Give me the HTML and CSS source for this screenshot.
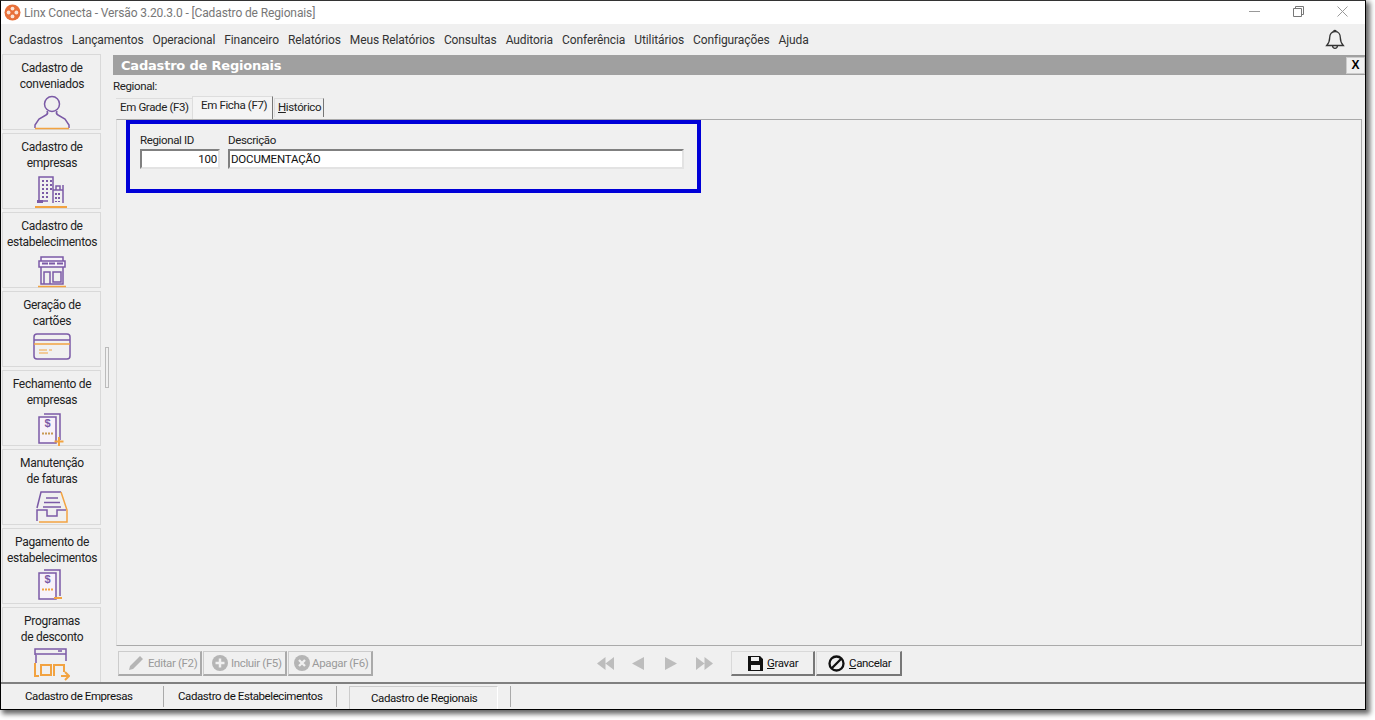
FILE: index.html
```html
<!DOCTYPE html>
<html lang="pt-BR">
<head>
<meta charset="utf-8">
<title>Linx Conecta</title>
<link rel="stylesheet" href="styles.css">
</head>
<body>
<div class="window">
  <header class="titlebar">
    <svg class="applogo" width="17" height="17" viewBox="0 0 17 17"><circle cx="8.500" cy="8.500" r="8" fill="#e8703a"/><circle cx="8.500" cy="4.600" r="1.900" fill="#fbe3d6"/><circle cx="8.500" cy="12.400" r="1.900" fill="#fbe3d6"/><circle cx="4.600" cy="8.500" r="1.900" fill="#fbe3d6"/><circle cx="12.400" cy="8.500" r="1.900" fill="#fbe3d6"/></svg>
    <span class="titletext">Linx Conecta - Versão 3.20.3.0 - [Cadastro de Regionais]</span>
    <div class="winctrls">
      <svg width="11" height="11" viewBox="0 0 11 11"><path d="M0 5.500H11" stroke="#999" fill="none"/></svg>
      <svg width="11" height="11" viewBox="0 0 11 11"><path d="M.5 2.500h8v8h-8zM2.500 2.500v-2h8v8h-2" stroke="#777" fill="none"/></svg>
      <svg width="11" height="11" viewBox="0 0 11 11"><path d="M.5.5l10 10M10.500.5l-10 10" stroke="#999" fill="none"/></svg>
    </div>
  </header>
  <nav class="menubar">
    <span>Cadastros</span><span>Lançamentos</span><span>Operacional</span><span>Financeiro</span><span>Relatórios</span><span>Meus Relatórios</span><span>Consultas</span><span>Auditoria</span><span>Conferência</span><span>Utilitários</span><span>Configurações</span><span>Ajuda</span>
    <svg class="bell" width="20" height="22" viewBox="0 0 20 22"><path d="M10 2.500c-3.600 0-5.300 2.800-5.300 6 0 4-1 5.800-3 8h16.600c-2-2.200-3-4-3-8 0-3.200-1.700-6-5.300-6zM8.800 2.500c0-1.600 2.400-1.600 2.400 0M7.500 16.800c.3 3.400 4.700 3.400 5 0" fill="none" stroke="#333" stroke-width="1.300"/></svg>
  </nav>
  <div class="body">
    <aside class="sidebar">
      <div class="sidebtn"><p>Cadastro de<br>conveniados</p>
        <svg width="36" height="36" viewBox="0 0 36 36"><circle cx="18" cy="9" r="7.500" fill="none" stroke="#7b5aa6" stroke-width="1.500"/><path d="M13 16c1 2 1 3-1 4l-7 4-4 6v3M23 16c-1 2-1 3 1 4l7 4 4 6v3" fill="none" stroke="#7b5aa6" stroke-width="1.500"/><path d="M1 33.500h34" stroke="#f2a341" stroke-width="1.500"/></svg></div>
      <div class="sidebtn"><p>Cadastro de<br>empresas</p>
        <svg width="36" height="36" viewBox="0 0 36 36"><path d="M5 28V3h14v26M19 16h10v13M22 16v-4h4v4M29 11v5M5 27h9" fill="none" stroke="#7b5aa6" stroke-width="1.500"/><path d="M8 6h2v2H8zM12 6h2v2h-2zM16 6h2v2h-2zM8 10h2v2H8zM12 10h2v2h-2zM16 10h2v2h-2zM8 14h2v2H8zM12 14h2v2h-2zM16 14h2v2h-2zM8 18h2v2H8zM12 18h2v2h-2zM8 22h2v2H8zM12 22h2v2h-2zM21 19h2v2h-2zM24 19h2v2h-2zM21 23h2v2h-2zM24 23h2v2h-2zM21 27h2v1h-2zM24 27h2v1h-2zM3 29h6v-3H3z" fill="#7b5aa6"/><path d="M1 33h32" stroke="#f2a341" stroke-width="2"/></svg></div>
      <div class="sidebtn"><p>Cadastro de<br>estabelecimentos</p>
        <svg width="36" height="36" viewBox="0 0 36 36"><path d="M5 8h26v6H5zM7 4h22v4H7z" fill="#f7f2fa" stroke="#7b5aa6" stroke-width="1.500"/><path d="M8 10.500h6M15 10.500h6M23 10.500h6" stroke="#7b5aa6" stroke-width="2"/><path d="M7 14v17h22V14M10 31V19h6v12M19 19h8v10h-8z" fill="none" stroke="#7b5aa6" stroke-width="1.500"/><path d="M4 33.500h28" stroke="#f2a341" stroke-width="1.500"/></svg></div>
      <div class="sidebtn"><p>Geração de<br>cartões</p>
        <svg width="38" height="32" viewBox="0 0 38 32"><rect x="1" y="2" width="36" height="25" rx="3" fill="none" stroke="#7b5aa6" stroke-width="1.500"/><path d="M1 8h36" stroke="#7b5aa6" stroke-width="1.500"/><path d="M1 12h36" stroke="#f2a341" stroke-width="1.500"/><path d="M6 18h8M16 18h3M6 21h9" stroke="#f2a341" stroke-width="1.200"/></svg></div>
      <div class="sidebtn"><p>Fechamento de<br>empresas</p>
        <svg width="30" height="36" viewBox="0 0 30 36"><path d="M7 3h16v26" fill="none" stroke="#7b5aa6" stroke-width="1.500"/><path d="M2 6h17v26H2z" fill="#f7f2fa" stroke="#7b5aa6" stroke-width="1.500"/><text x="10.500" y="16" class="dollar">$</text><path d="M5 22.500h12" stroke="#c99a55" stroke-width="2" stroke-dasharray="2 1"/><path d="M22 26v9M17.500 30.500h9" stroke="#f2a341" stroke-width="2"/></svg></div>
      <div class="sidebtn"><p>Manutenção<br>de faturas</p>
        <svg width="34" height="34" viewBox="0 0 34 34"><path d="M2 18L6 2h20" fill="none" stroke="#7b5aa6" stroke-width="1.500"/><path d="M26 2l6 18v12H4" fill="none" stroke="#f2a341" stroke-width="1.500"/><path d="M2 31V20h10v6h10v-6h9" fill="none" stroke="#7b5aa6" stroke-width="1.500"/><path d="M11 8h12M9 12.500h16M8 17h18" stroke="#7b5aa6" stroke-width="1.500"/></svg></div>
      <div class="sidebtn"><p>Pagamento de<br>estabelecimentos</p>
        <svg width="30" height="32" viewBox="0 0 30 32"><path d="M7 1h16v26" fill="none" stroke="#7b5aa6" stroke-width="1.500"/><path d="M2 4h17v26H2z" fill="#f7f2fa" stroke="#7b5aa6" stroke-width="1.500"/><text x="10.500" y="14" class="dollar">$</text><path d="M5 20.500h11" stroke="#f2a341" stroke-width="2" stroke-dasharray="2 1"/><path d="M17 29h8" stroke="#f2a341" stroke-width="2"/></svg></div>
      <div class="sidebtn"><p>Programas<br>de desconto</p>
        <svg width="36" height="34" viewBox="0 0 36 34"><path d="M1 7V1h31v12M1 6h31M2 7v8" fill="none" stroke="#7b5aa6" stroke-width="1.500"/><path d="M24 3h4" stroke="#7b5aa6" stroke-width="1.500"/><path d="M1 15v13h4M7 17h10v10H7zM20 28V17h10v7M27 28h8M31 24l4 4-4 4" fill="none" stroke="#f2a341" stroke-width="2"/></svg></div>
    </aside>
    <div class="splitter"><i></i></div>
    <main class="content">
      <div class="formhead"><h1>Cadastro de Regionais</h1><button class="closex" type="button">X</button></div>
      <div class="crumb">Regional:</div>
      <div class="tabs">
        <span class="tab first">Em Grade (F3)</span>
        <span class="tab active">Em Ficha (F7)</span>
        <span class="tab third"><u>H</u>istórico</span>
      </div>
      <section class="panel">
        <div class="highlight">
          <label class="field idfield">Regional ID<input class="input num" value="100"></label>
          <label class="field descfield">Descrição<input class="input" value="DOCUMENTAÇÃO"></label>
        </div>
      </section>
      <div class="toolbar">
        <button class="btn dis w84 p9" type="button"><svg width="16" height="16" viewBox="0 0 16 16"><path d="M1 15l1-4L11 2l3 3-9 9z M12 1l3 3-1 1-3-3z" fill="#b5b5b5"/></svg>Editar (F2)</button>
        <button class="btn dis w84 p8" type="button"><svg width="16" height="16" viewBox="0 0 16 16"><circle cx="8" cy="8" r="8" fill="#b5b5b5"/><path d="M8 3.500v9M3.500 8h9" stroke="#f0f0f0" stroke-width="2.500"/></svg>Incluir (F5)</button>
        <button class="btn dis w85 p5" type="button"><svg width="16" height="16" viewBox="0 0 16 16"><circle cx="8" cy="8" r="8" fill="#b5b5b5"/><path d="M5 5l6 6M11 5l-6 6" stroke="#f0f0f0" stroke-width="2.300"/></svg>Apagar (F6)</button>
        <div class="nav">
          <svg width="17" height="13" viewBox="0 0 17 13"><path d="M8.500 0v13L0 6.500zM17 0v13L8.500 6.500z" fill="#bdbdbd"/></svg>
          <svg width="12" height="13" viewBox="0 0 12 13"><path d="M12 0v13L0 6.500z" fill="#bdbdbd"/></svg>
          <svg width="12" height="13" viewBox="0 0 12 13"><path d="M0 0v13l12-6.500z" fill="#bdbdbd"/></svg>
          <svg width="17" height="13" viewBox="0 0 17 13"><path d="M0 0v13l8.500-6.500zM8.500 0v13L17 6.500z" fill="#bdbdbd"/></svg>
        </div>
        <button class="btn w84 save" type="button"><svg width="15" height="15" viewBox="0 0 15 15"><path fill-rule="evenodd" d="M0 0h12l3 3v12H0zM3 1v4h8V1zM3 9v5h9V9z" fill="#111"/></svg><span><u>G</u>ravar</span></button>
        <button class="btn w86 cancel" type="button"><svg width="17" height="17" viewBox="0 0 17 17"><circle cx="8.500" cy="8.500" r="7" fill="none" stroke="#111" stroke-width="2.300"/><path d="M3.500 13.500l10-10" stroke="#111" stroke-width="2.300"/></svg><span><u>C</u>ancelar</span></button>
      </div>
    </main>
  </div>
  <footer class="statusbar">
    <span class="st s1">Cadastro de Empresas</span>
    <span class="st s2">Cadastro de Estabelecimentos</span>
    <span class="st s3">Cadastro de Regionais</span>
    <span class="st s4"></span>
  </footer>
</div>
</body>
</html>
```
FILE: styles.css
```css
* { box-sizing: border-box; }
html, body { margin: 0; padding: 0; height: 720px; overflow: hidden; background: #fff; }
body { font: 12px Roboto, "Liberation Sans", Arial, sans-serif; color: #111; }
.window {
  width: 1366px; height: 710px; background: #f0f0f0;
  border: 1px solid #000; border-top: 1px solid #333; display: flex; flex-direction: column;
  box-shadow: 3px 3px 5px 1px #666;
}
.titlebar { height: 23px; background: #fff; display: flex; align-items: center; padding-left: 3px; flex: none; }
.applogo { margin-right: 3px; flex: none; }
.titletext { color: #777; font-size: 12px; letter-spacing: -.12px; }
.winctrls { margin-left: auto; display: flex; gap: 33px; padding-right: 17px; margin-top: -2px; }
.menubar { height: 31px; flex: none; background: #f0f0f0; display: flex; align-items: center; padding-left: 8px; gap: 9px; color: #333; letter-spacing: -.1px; }
.bell { margin-left: auto; margin-right: 20px; }
.body { flex: 1; display: flex; min-height: 0; }
.sidebar { width: 99px; flex: none; margin: -1px 0 0 1px; display: flex; flex-direction: column; gap: 3px; overflow: hidden; height: 629px; }
.sidebtn { flex: none; height: 76px; border: 1px solid #d9d9d9; display: flex; flex-direction: column; align-items: center; padding-left: 1px; background: #f0f0f0; }
.sidebtn p { margin: 5px 0 0; height: 32px; line-height: 16px; text-align: center; white-space: nowrap; color: #222; letter-spacing: -.3px; }
.sidebtn svg { flex: none; margin-top: 3px; }
.dollar { font: bold 11px "Liberation Sans", sans-serif; fill: #7b5aa6; text-anchor: middle; }
.splitter { width: 12px; flex: none; display: flex; justify-content: center; padding-top: 292px; height: 628px; }
.splitter i { display: block; width: 4px; height: 41px; border: 1px solid #bbb; }
.content { flex: 1; min-width: 0; display: flex; flex-direction: column; font-size: 11.500px; letter-spacing: -.36px; }
.formhead { height: 20px; flex: none; background: #a0a0a0; display: flex; align-items: center; justify-content: space-between; padding-left: 8px; }
.formhead h1 { margin: 0; font: bold 13px "DejaVu Sans", sans-serif; letter-spacing: -.2px; color: #fff; }
.closex { width: 19px; height: 17px; padding: 0; margin: 0 0 0 auto; border: 1px solid #ccc; background: #f0f0f0; font: bold 12px "Liberation Sans", sans-serif; color: #000; }
.crumb { height: 21px; flex: none; padding-top: 4px; color: #222; }
.tabs { display: flex; height: 23px; flex: none; padding-left: 3px; align-items: flex-start; color: #222; }
.tab { margin-top: 2px; height: 19px; line-height: 17px; background: #f0f0f0; border-top: 1px solid #ddd; }
.tab.first { width: 76px; padding-left: 4px; }
.tab.active { margin-top: 0; height: 23px; width: 81px; background: #f4f4f4; padding-left: 8px; line-height: 16px; border: 1px solid #ddd; border-bottom: 0; border-right: 1px solid #777; }
.tab.third { width: 50px; margin-left: 1px; padding-left: 3px; border-right: 1px solid #777; border-left: 1px solid #ddd; }
.panel { margin: 0 3px; height: 527px; flex: none; border: 1px solid #aaa; border-left-color: #ddd; background: #f0f0f0; padding: 0 0 0 9px; }
.highlight { width: 575px; height: 73px; border: 4px solid #0000d8; display: flex; gap: 8px; padding: 8px 12px 0 10px; }
.field { display: flex; flex-direction: column; color: #222; line-height: 16px; }
.idfield { width: 80px; }
.descfield { width: 456px; }
.input { height: 20px; width: 100%; margin-top: 1px; padding: 0 1px 1px; border: 2px solid #e3e3e3; border-top-color: #808080; border-left-color: #808080; background: #fff; font: 11.500px Roboto, sans-serif; letter-spacing: -.18px; color: #111; outline: none; }
.num { text-align: right; }
.toolbar { height: 35px; flex: none; display: flex; align-items: center; padding-left: 5px; gap: 1px; }
.btn { height: 25px; padding: 0; display: flex; align-items: center; gap: 4px; background: #f0f0f0; border: 1px solid #d9d9d9; border-right: 2px solid #777; border-bottom: 2px solid #777; font: 11.500px Roboto, sans-serif; letter-spacing: -.36px; color: #111; white-space: nowrap; }
.btn svg { flex: none; }
.btn.dis { color: #9a9a9a; border-color: #ccc #aaa #aaa #ccc; }
.w84 { width: 84px; }
.w85 { width: 85px; }
.w86 { width: 86px; }
.p9 { padding-left: 9px; }
.p8 { padding-left: 8px; gap: 3px; }
.p5 { padding-left: 5px; gap: 2px; }
.save { padding-left: 16px; }
.cancel { padding-left: 11px; }
.nav { width: 356px; display: flex; align-items: center; padding-left: 223px; flex: none; }
.nav svg:nth-child(2) { margin-left: 18px; }
.nav svg:nth-child(3) { margin-left: 21px; }
.nav svg:nth-child(4) { margin-left: 19px; }
.statusbar { height: 27px; flex: none; border-top: 2px solid #808080; background: #f0f0f0; display: flex; align-items: flex-end; font-size: 11.500px; letter-spacing: -.42px; }
.st { height: 21px; line-height: 21px; margin-bottom: 2px; white-space: nowrap; color: #111; }
.s1 { width: 163px; padding-left: 24px; border-right: 1px solid #aaa; }
.s2 { width: 173px; padding-left: 14px; border-right: 1px solid #aaa; }
.s3 { width: 149px; margin-left: 12px; padding-left: 21px; border: 1px solid #ccc; border-right-color: #fff; border-bottom: 0; height: 23px; margin-bottom: 0; line-height: 22px; }
.s4 { width: 13px; border-right: 1px solid #aaa; }
```
